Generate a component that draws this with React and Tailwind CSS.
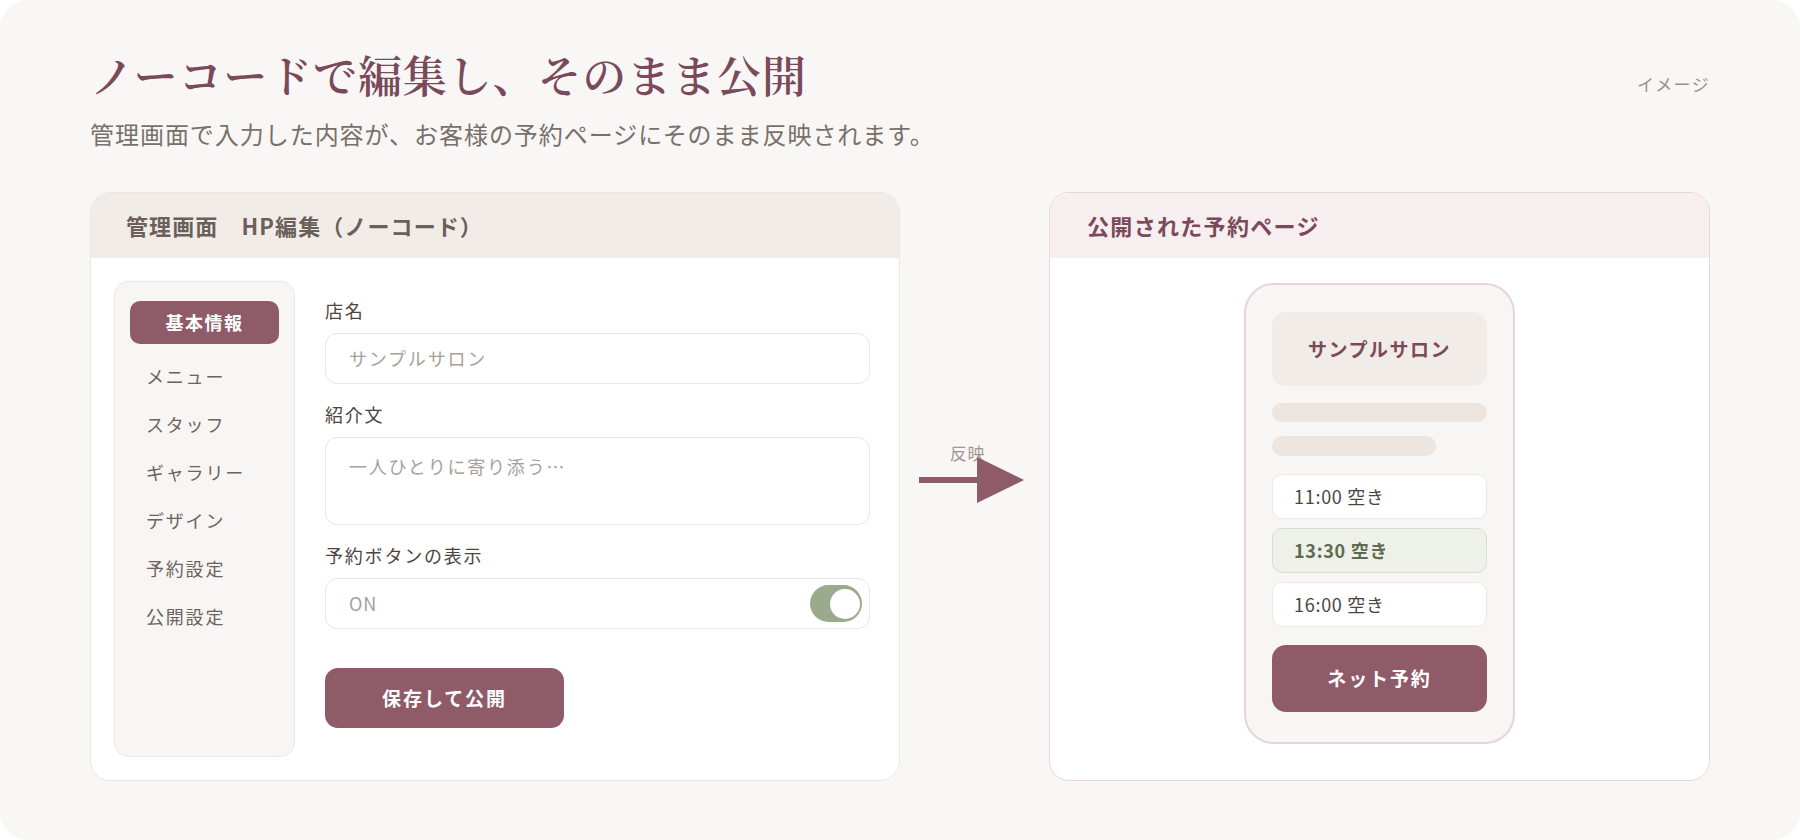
import React from 'react';

const menuItems = ['メニュー', 'スタッフ', 'ギャラリー', 'デザイン', '予約設定', '公開設定'];

const slots = [
    { time: '11:00', picked: false },
    { time: '13:30', picked: true },
    { time: '16:00', picked: false },
];

function Field({ label, children }) {
    return (
        <div>
            <div className="text-[18px] leading-[24px] tracking-[0.1em] text-[#4d4440]">{label}</div>
            <div className="mt-[11px]">{children}</div>
        </div>
    );
}

function AdminPanel() {
    return (
        <div className="flex h-[589px] w-[810px] flex-col overflow-hidden rounded-[20px] border border-[#ece6e2] bg-white">
            <div className="flex h-[65px] items-center bg-[#f2ece8] px-[35px] text-[22px] font-bold tracking-[0.05em] text-[#6b5f5a]">
                管理画面　HP編集（ノーコード）
            </div>
            <div className="flex flex-1 py-[23px] pl-[23px] pr-[29px]">
                {/* side menu */}
                <div className="w-[181px] rounded-[14px] border border-[#eee7e2] bg-[#f8f6f4] px-[15px] pt-[19px]">
                    <div className="flex h-[43px] items-center justify-center rounded-[10px] bg-[#8f5b68] text-[18px] font-bold tracking-[0.08em] text-white">
                        基本情報
                    </div>
                    <div className="mt-[8px]">
                        {menuItems.map((item) => (
                            <div key={item} className="flex h-[48px] items-center pl-[16px] text-[18px] tracking-[0.1em] text-[#6d635e]">
                                {item}
                            </div>
                        ))}
                    </div>
                </div>

                {/* form */}
                <div className="ml-[30px] flex flex-1 flex-col pt-[17px]">
                    <Field label="店名">
                        <div className="flex h-[51px] items-center rounded-[12px] border border-[#ece5e0] px-[23px] text-[18px] tracking-[0.1em] text-[#a8a09b]">
                            サンプルサロン
                        </div>
                    </Field>
                    <div className="mt-[18px]">
                        <Field label="紹介文">
                            <div className="h-[88px] rounded-[12px] border border-[#ece5e0] px-[23px] pt-[16px] text-[18px] leading-[24px] tracking-[0.1em] text-[#a8a09b]">
                                一人ひとりに寄り添う…
                            </div>
                        </Field>
                    </div>
                    <div className="mt-[18px]">
                        <Field label="予約ボタンの表示">
                            <div className="flex h-[51px] items-center justify-between rounded-[12px] border border-[#ece5e0] pl-[23px] pr-[7px] text-[18px] tracking-[0.05em] text-[#a8a09b]">
                                <span>ON</span>
                                <div className="flex h-[37px] w-[52px] items-center justify-end rounded-full bg-[#9caa8c] pr-[2px]">
                                    <div className="h-[30px] w-[30px] rounded-full bg-white" />
                                </div>
                            </div>
                        </Field>
                    </div>
                    <button className="mt-[39px] flex h-[60px] w-[239px] items-center justify-center rounded-[13px] bg-[#8f5b68] text-[19px] font-bold tracking-[0.1em] text-white">
                        保存して公開
                    </button>
                </div>
            </div>
        </div>
    );
}

function ReflectArrow() {
    return (
        <div className="flex flex-1 items-center justify-center pb-[27px] pr-[6px]">
            <div className="flex flex-col items-center">
                <span className="mr-[8px] text-[17px] leading-[20px] tracking-[0.04em] text-[#a3968f]">反映</span>
                <svg width="106" height="46" viewBox="0 0 106 46" className="-mt-[6px]">
                    <rect x="0" y="20" width="60" height="6" fill="#8f5b68" />
                    <polygon points="58,0 105,23 58,46" fill="#8f5b68" />
                </svg>
            </div>
        </div>
    );
}

function PublicPanel() {
    return (
        <div className="flex h-[589px] w-[661px] flex-col overflow-hidden rounded-[20px] border border-[#ead6dc] bg-white">
            <div className="flex h-[65px] items-center bg-[#f7eeef] px-[37px] text-[22px] font-bold tracking-[0.06em] text-[#7b4a5a]">
                公開された予約ページ
            </div>
            <div className="flex flex-1 justify-center pt-[25px]">
                {/* phone preview */}
                <div className="h-[461px] w-[271px] rounded-[30px] border-2 border-[#e8d3da] bg-[#f8f6f4] px-[26px] pt-[27px]">
                    <div className="flex h-[74px] items-center justify-center rounded-[14px] bg-[#f2ece8] text-[19px] font-bold tracking-[0.08em] text-[#7b4a5a]">
                        サンプルサロン
                    </div>
                    <div className="mt-[17px] h-[19px] rounded-full bg-[#ede5e0]" />
                    <div className="mt-[14px] h-[20px] w-[164px] rounded-full bg-[#ede5e0]" />
                    <div className="mt-[18px] flex flex-col gap-[9px]">
                        {slots.map((s) => (
                            <div
                                key={s.time}
                                className={`flex h-[45px] items-center rounded-[10px] border px-[21px] text-[18px] tracking-[0.04em] ${s.picked
                                    ? 'border-[#d5dfcc] bg-[#edf1e9] font-semibold text-[#5e6b4e]'
                                    : 'border-[#eee8e3] bg-white text-[#4d4440]'
                                    }`}
                            >
                                {s.time} 空き
                            </div>
                        ))}
                    </div>
                    <button className="mt-[18px] flex h-[67px] w-full items-center justify-center rounded-[14px] bg-[#8f5b68] text-[19px] font-bold tracking-[0.1em] text-white">
                        ネット予約
                    </button>
                </div>
            </div>
        </div>
    );
}

export default function App() {
    return (
        <div className="min-h-screen bg-white font-['Noto_Sans_CJK_JP','Noto_Sans',sans-serif]">
            <div className="h-[840px] rounded-[28px] bg-[#f8f7f5] px-[90px] pt-[48px]">
                <div className="flex items-start justify-between">
                    <h1 className="font-['Noto_Serif_CJK_JP','Noto_Sans_CJK_JP',serif] text-[44px] font-semibold leading-[53px] tracking-[0.02em] text-[#7b4a5a]">
                        ノーコードで編集し、そのまま公開
                    </h1>
                    <span className="mt-[24px] text-[17px] leading-[24px] tracking-[0.08em] text-[#9b8f89]">イメージ</span>
                </div>
                <p className="mt-[17px] text-[24px] leading-[32px] tracking-[0.04em] text-[#7a706b]">
                    管理画面で入力した内容が、お客様の予約ページにそのまま反映されます。
                </p>

                <div className="mt-[42px] flex">
                    <AdminPanel />
                    <ReflectArrow />
                    <PublicPanel />
                </div>
            </div>
        </div>
    );
}
